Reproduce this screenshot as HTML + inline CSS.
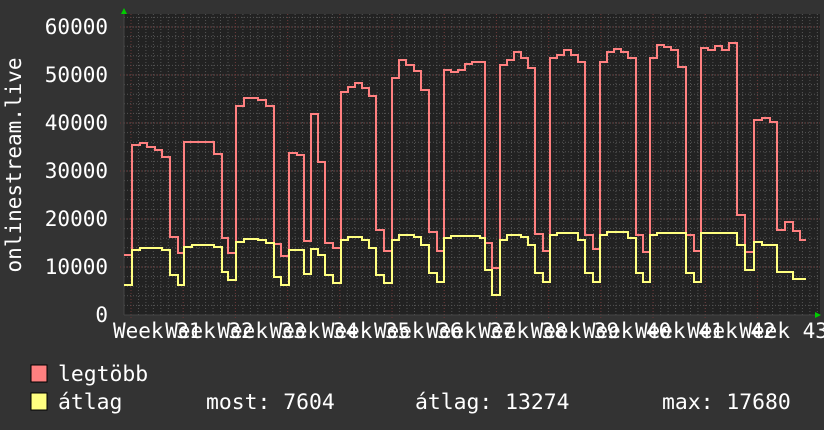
<!DOCTYPE html><html><head><meta charset="utf-8"><style>
body{margin:0;width:824px;height:430px;background:#333;overflow:hidden}
svg{display:block}
text{font-family:"DejaVu Sans Mono","Liberation Mono",monospace;fill:#fff}
</style></head><body>
<svg id="s" width="824" height="430" xmlns="http://www.w3.org/2000/svg">
<rect width="824" height="430" fill="#333"/>
<rect x="124" y="14" width="696" height="301" fill="#222"/>
<g id="grid"></g>
<path id="pk" fill="none" stroke="#ff8080" stroke-width="2"/>
<path id="yl" fill="none" stroke="#ffff80" stroke-width="2"/>
<polygon points="121,14 127,14 124,8" fill="#0c0"/>
<polygon points="815,312 815,318 821,315" fill="#0c0"/>
<g font-size="21" text-anchor="end">
<text x="108" y="34">60000</text><text x="108" y="82">50000</text><text x="108" y="130">40000</text>
<text x="108" y="178">30000</text><text x="108" y="226">20000</text><text x="108" y="274">10000</text>
<text x="108" y="322">0</text></g>
<text transform="translate(21,165) rotate(-90)" font-size="21" text-anchor="middle">onlinestream.live</text>
<g id="wk" font-size="21"></g>
<rect x="31" y="365" width="16" height="17" fill="#ff8080" stroke="#000"/>
<rect x="31" y="393" width="16" height="17" fill="#ffff80" stroke="#000"/>
<g font-size="21.4"><text x="58" y="381">legtöbb</text><text x="58" y="409">átlag</text>
<text x="206" y="409">most: 7604</text><text x="415" y="409">átlag: 13274</text><text x="662" y="409">max: 17680</text></g>
</svg>
<script>
var g=document.getElementById('grid'),h='';
for(var y=315-9.6;y>14;y-=9.6)h+='<line x1="124" x2="820" y1="'+y+'" y2="'+y+'" stroke="#555" stroke-dasharray="1,2"/>';
for(var x=131-7.46;x<820;x+=7.46)if(x>124)h+='<line y1="14" y2="315" x1="'+x+'" x2="'+x+'" stroke="#555" stroke-dasharray="1,2"/>';
for(var k=1;k<=6;k++){var y=315-48*k;h+='<line x1="120" x2="820" y1="'+y+'" y2="'+y+'" stroke="#6a3535" stroke-dasharray="1,2"/>';}
for(var k=0;k<13;k++){var x=131+52.2*k;h+='<line y1="14" y2="319" x1="'+x+'" x2="'+x+'" stroke="#6a3535" stroke-dasharray="1,2"/>';}
h+='<line x1="124" x2="124" y1="14" y2="315" stroke="#444"/><line x1="124" x2="820" y1="315" y2="315" stroke="#444"/>';
g.innerHTML=h;
var w='';for(var k=0;k<13;k++)w+='<text x="'+(113+52.2*k)+'" y="338">Week '+(31+k)+'</text>';
document.getElementById('wk').innerHTML=w;
function st(a){var d='M124,'+a[1];for(var i=0;i<a.length;i+=2){d+=' V'+a[i+1]+' H'+(a[i+2]||806);}return d;}
var P=[124,255,132,145,140,143,147,147,155,150,162,157,170,237,178,253,184,142,214,154,222,238,228,253,236,106,244,98,258,100,266,106,274,244,281,256,289,153,297,155,304,241,311,114,318,162,325,243,333,248,341,92,348,87,355,83,362,88,369,96,376,230,384,251,392,78,399,60,406,65,414,71,421,90,429,232,437,251,444,70,451,72,458,70,465,64,472,62,485,243,492,268,500,65,507,60,514,52,521,58,528,68,535,234,543,251,550,58,557,55,564,50,571,55,578,62,585,235,593,249,600,62,607,52,614,49,621,52,628,58,636,235,643,252,650,58,657,45,664,47,671,50,678,67,686,235,694,251,701,48,708,50,715,46,722,50,729,43,737,215,745,252,754,120,762,118,770,122,777,230,785,222,793,231,800,240];
var Y=[124,285,132,250,140,248,162,250,170,275,178,285,184,247,192,245,214,247,222,272,228,280,236,242,244,239,258,240,266,243,274,277,281,285,289,250,304,274,311,249,318,255,325,275,333,283,341,240,348,237,362,240,369,248,376,275,384,283,392,240,399,235,414,237,421,245,429,273,437,282,444,238,451,236,480,238,485,270,492,295,500,240,507,235,521,237,528,245,535,273,543,282,550,235,557,233,578,240,585,273,593,282,600,235,607,232,628,238,636,273,643,282,650,235,657,233,686,273,694,282,701,233,737,245,745,270,754,242,762,245,777,272,793,279];
document.getElementById('pk').setAttribute('d',st(P));
document.getElementById('yl').setAttribute('d',st(Y));
</script>
</body></html>
